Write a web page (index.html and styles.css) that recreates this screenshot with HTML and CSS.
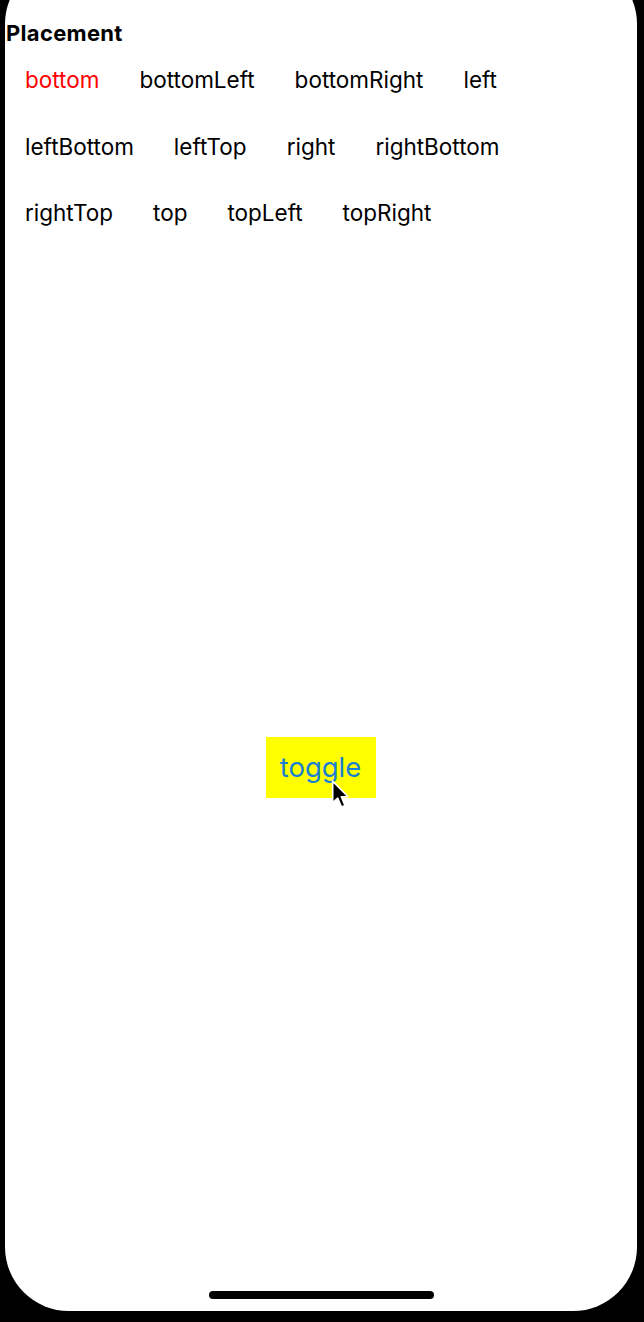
FILE: index.html
```html
<!DOCTYPE html>
<html>
<head>
<meta charset="utf-8">
<link rel="stylesheet" href="styles.css">
</head>
<body>
<div class="frame">
  <div class="screen">
    <h1 class="title">Placement</h1>
    <div class="options">
      <div class="row">
        <span class="opt active">bottom</span>
        <span class="opt">bottomLeft</span>
        <span class="opt">bottomRight</span>
        <span class="opt">left</span>
      </div>
      <div class="row">
        <span class="opt">leftBottom</span>
        <span class="opt">leftTop</span>
        <span class="opt">right</span>
        <span class="opt">rightBottom</span>
      </div>
      <div class="row">
        <span class="opt">rightTop</span>
        <span class="opt">top</span>
        <span class="opt">topLeft</span>
        <span class="opt">topRight</span>
      </div>
    </div>
    <div class="stage">
      <div class="toggle">
        toggle
        <svg class="cursor" width="20" height="32" viewBox="0 0 18 28">
          <path d="M1.5 1.5 L1.5 21 L6 16.8 L9.4 24.8 L12.6 23.4 L9.3 15.6 L15.4 15.6 Z" fill="#000" stroke="#fff" stroke-width="1.5" stroke-linejoin="round"/>
        </svg>
      </div>
    </div>
    <div class="home"></div>
  </div>
</div>
</body>
</html>
```
FILE: styles.css
```css
html, body {
  margin: 0;
  padding: 0;
  background: #000;
}
.frame {
  width: 644px;
  height: 1322px;
  box-sizing: border-box;
  padding: 0 7px 10px 5px;
  overflow: hidden;
}
.screen {
  margin-top: -40px;
  height: 1351px;
  background: #fff;
  border-radius: 64px;
  padding-top: 40px;
  box-sizing: border-box;
  display: flex;
  flex-direction: column;
  font-family: Inter, "Noto Sans", sans-serif;
  color: #000;
}
.title {
  margin: 0;
  padding: 20px 0 0 1px;
  font-size: 22px;
  line-height: 26px;
  font-weight: 700;
  letter-spacing: 0.3px;
}
.options {
  display: flex;
  flex-direction: column;
  padding: 20px 0 0 0;
}
.row {
  display: flex;
  height: 66.5px;
  align-items: flex-start;
}
.opt {
  padding: 0 20px;
  font-size: 22.5px;
  line-height: 28px;
}
.opt.active {
  color: #f00;
}
.stage {
  display: flex;
  justify-content: center;
  padding-top: 471px;
}
.toggle {
  position: relative;
  background: #ff0;
  color: #1a7fd2;
  font-size: 27.5px;
  line-height: 61px;
  height: 61px;
  width: 110px;
  text-align: center;
  margin-left: -1px;
}
.cursor {
  position: absolute;
  left: 65px;
  top: 42px;
}
.home {
  margin: auto auto 12px auto;
  width: 225px;
  height: 8px;
  border-radius: 4px;
  background: #000;
}
```
